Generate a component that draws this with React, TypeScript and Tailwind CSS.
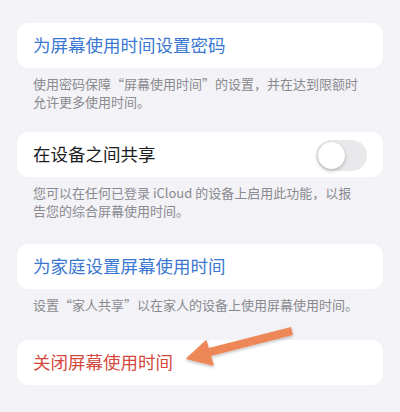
import React from "react";

const font = { fontFamily: '"Noto Sans CJK SC", "Noto Sans", sans-serif' };

function Card({ children }: { children: React.ReactNode }) {
  return (
    <div className="h-[45px] bg-white rounded-[11px] flex items-center justify-between pl-4 pr-4">
      {children}
    </div>
  );
}

function Footer({ lines }: { lines: string[] }) {
  return (
    <div className="pt-[7px] px-4 text-[13px] leading-[18px] text-[#8a8a8e]">
      {lines.map((l, i) => (
        <div key={i} className="whitespace-nowrap">
          {l}
        </div>
      ))}
    </div>
  );
}

export default function App() {
  return (
    <div
      className="relative w-[400px] h-[412px] overflow-hidden bg-[#f2f2f7] px-[17px] pt-[23px]"
      style={font}
    >
      <div className="flex flex-col">
        <Card>
          <span className="text-[17.5px] text-[#3a78d2]">为屏幕使用时间设置密码</span>
        </Card>
        <Footer lines={["使用密码保障“屏幕使用时间”的设置，并在达到限额时", "允许更多使用时间。"]} />
        <div className="h-[21px]" />
        <Card>
          <span className="text-[17.5px] text-[#1c1c1e]">在设备之间共享</span>
          <div className="w-[51px] h-[31px] rounded-full bg-[#e9e9eb] p-[2px] flex items-center mt-[2px]">
            <div className="w-[27px] h-[27px] rounded-full bg-white shadow-[0_2px_4px_rgba(0,0,0,0.2),0_0_1px_rgba(0,0,0,0.15)]" />
          </div>
        </Card>
        <Footer lines={["您可以在任何已登录 iCloud 的设备上启用此功能，以报", "告您的综合屏幕使用时间。"]} />
        <div className="h-[24px]" />
        <Card>
          <span className="text-[17.5px] text-[#3a78d2]">为家庭设置屏幕使用时间</span>
        </Card>
        <Footer lines={["设置“家人共享”以在家人的设备上使用屏幕使用时间。"]} />
        <div className="h-[26px]" />
        <Card>
          <span className="text-[17.5px] text-[#d5493d]">关闭屏幕使用时间</span>
        </Card>
      </div>
      <svg
        className="absolute left-0 top-0 pointer-events-none"
        width="400"
        height="412"
        viewBox="0 0 400 412"
      >
        <defs>
          <filter id="sh" x="-20%" y="-50%" width="140%" height="200%">
            <feDropShadow dx="0" dy="1.5" stdDeviation="1.5" floodColor="#000" floodOpacity="0.25" />
          </filter>
        </defs>
        <g filter="url(#sh)" fill="#ee8758" stroke="#ee8758">
          <line x1="292" y1="331" x2="204" y2="353.5" strokeWidth="8" strokeLinecap="butt" />
          <polygon points="187,358.5 206,341 213,365" strokeWidth="1.5" strokeLinejoin="round" />
        </g>
      </svg>
    </div>
  );
}
